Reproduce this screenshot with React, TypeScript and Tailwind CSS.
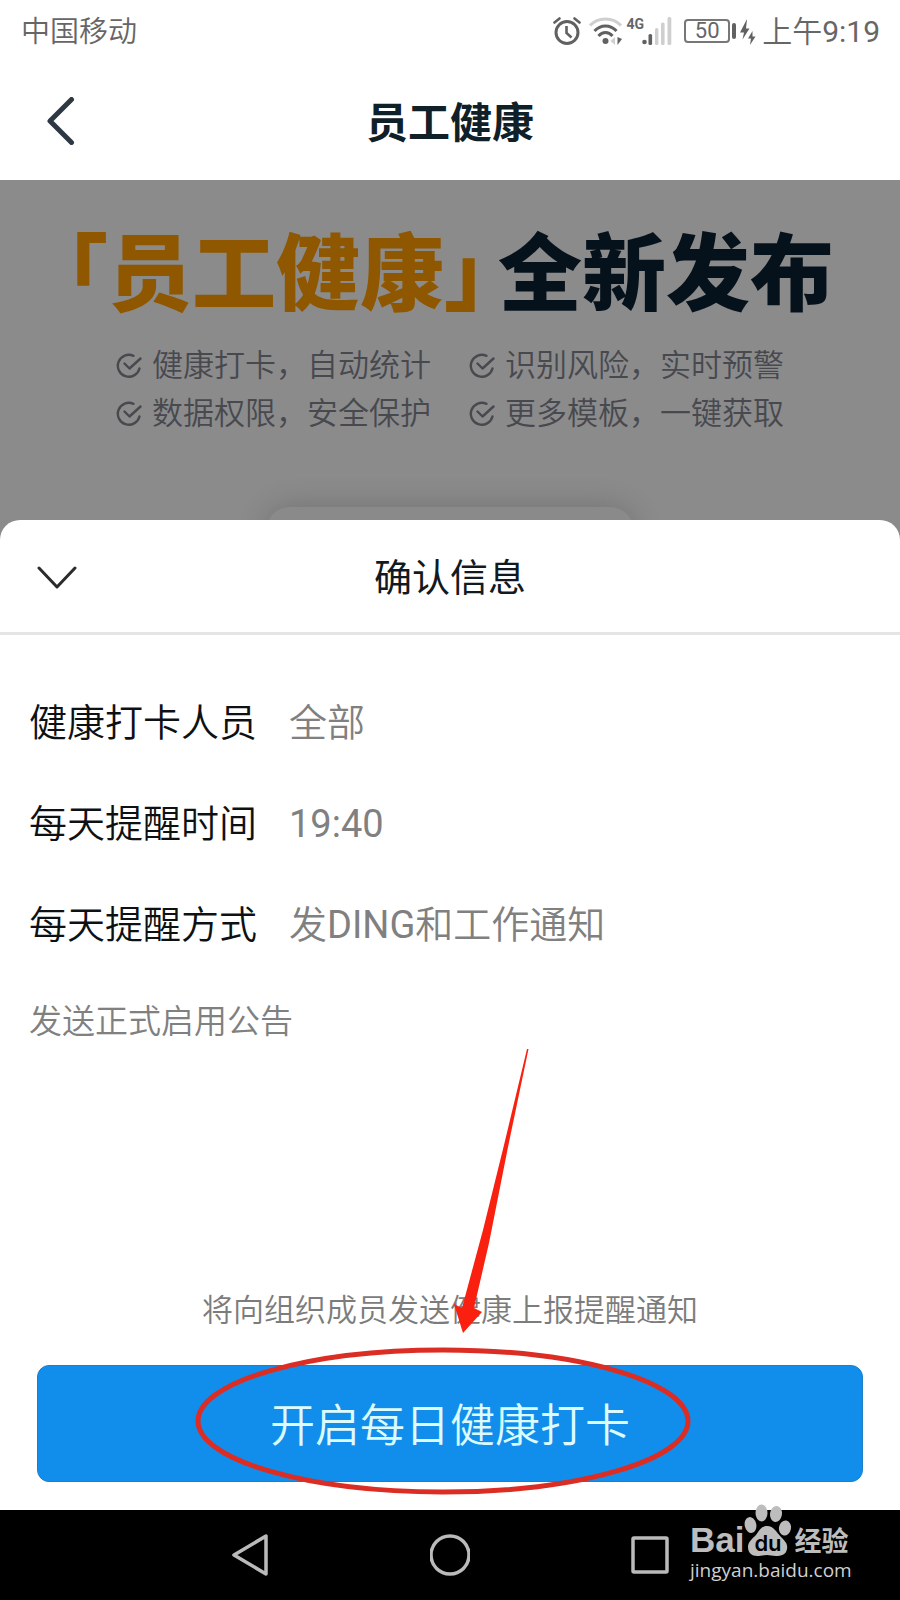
import { useState } from "react";

const features = [
  "健康打卡，自动统计",
  "识别风险，实时预警",
  "数据权限，安全保护",
  "更多模板，一键获取",
];

const details = [
  { label: "健康打卡人员", value: "全部" },
  { label: "每天提醒时间", value: <span className="font-normal">19:40</span> },
  {
    label: "每天提醒方式",
    value: (
      <>
        发<span className="font-normal">DING</span>和工作通知
      </>
    ),
  },
];

function AlarmIcon() {
  return (
    <svg width="28" height="28" viewBox="0 0 28 28" fill="none" stroke="#616161">
      <circle cx="14" cy="15.500" r="11" strokeWidth="3" />
      <path d="M13.500 9v7l5 4.500" strokeWidth="2.600" />
      <path d="M1.500 5.500 6.500 1.500M26.500 5.500 21.500 1.500" strokeWidth="2.600" strokeLinecap="round" />
    </svg>
  );
}

function WifiIcon() {
  return (
    <svg width="34" height="28" viewBox="0 0 34 28" fill="none" strokeWidth="3">
      <path d="M1 8.500C9-.200 24-.200 32 8.500" stroke="#cfcfcf" />
      <path d="M5.500 14c6-6.800 16-6.800 22 0" stroke="#616161" />
      <path d="M9.500 19c4-4.600 10-4.600 14 0" stroke="#616161" />
      <circle cx="16.500" cy="24" r="3" fill="#616161" />
      <path d="M26 20v8l-4.500-4z" fill="#cfcfcf" />
      <path d="M28.500 20v8l4.500-6z" fill="#616161" />
    </svg>
  );
}

function SignalIcon() {
  return (
    <svg width="30" height="28" viewBox="0 0 30 28">
      <circle cx="2.500" cy="25" r="2.300" fill="#616161" />
      <rect x="6.500" y="17" width="3.600" height="11" rx="1.500" fill="#616161" />
      <rect x="13" y="11" width="3.400" height="17" rx="1.500" fill="#cfcfcf" />
      <rect x="19" y="5.500" width="3.600" height="22.500" rx="1.500" fill="#cfcfcf" />
      <rect x="25.500" y="0" width="3.800" height="28" rx="1.500" fill="#cfcfcf" />
    </svg>
  );
}

function BoltIcon() {
  return (
    <svg width="16" height="28" viewBox="0 0 16 28" fill="#616161">
      <path d="M7 2 0 15.500h4L2.500 22.500 9.500 11.500H6z" />
      <path d="M12.500 14 8 21.500h3l-1 6.500 5.500-8.500h-3z" />
    </svg>
  );
}

function CheckIcon() {
  return (
    <svg width="26" height="26" viewBox="0 0 26 26" fill="none" stroke="#47494f" strokeWidth="2.400" strokeLinecap="round" strokeLinejoin="round">
      <path d="M17.500 2.800A11 11 0 1 0 23.500 15.500" />
      <path d="m8.500 10.500 5 5L24.500 5.500" />
    </svg>
  );
}

function PawIcon() {
  return (
    <svg width="50" height="54" viewBox="0 0 50 54" fill="#bdbdbd">
      <ellipse cx="17.500" cy="9" rx="6" ry="8.500" />
      <ellipse cx="32" cy="10" rx="6" ry="8" transform="rotate(8 32 10)" />
      <ellipse cx="6.500" cy="21" rx="5.800" ry="8" transform="rotate(-12 6.500 21)" />
      <ellipse cx="41" cy="24" rx="6" ry="7.500" transform="rotate(10 41 24)" />
      <path d="M23 22c7 0 9 6 14 11 4 4 7 7 6 12-1 6-6 7-11 7-4 0-6-1-9-1s-6 1-10 1C8 52 4 49 4 43c0-5 4-8 8-12 3-4 5-9 11-9z" />
      <text x="24" y="47" textAnchor="middle" fontFamily="Inter, sans-serif" fontSize="22" fontWeight="600" fill="#000">
        du
      </text>
    </svg>
  );
}

function Marker() {
  return (
    <svg
      className="pointer-events-none absolute bottom-3 left-1/2 -translate-x-1/2"
      width="510"
      height="449"
      viewBox="195 1049 510 449"
    >
      <path d="M527 1049h1.500L508 1147 489 1243 474 1308 482 1312 463 1333 454 1304 462 1308 483 1230 504 1145z" fill="#f9200f" />
      <ellipse cx="443" cy="1421" rx="245" ry="71" fill="none" stroke="#dc2d24" strokeWidth="5" />
    </svg>
  );
}

export default function App() {
  const [enabled, setEnabled] = useState(false);

  return (
    <div className="flex min-h-screen flex-col bg-white font-['Roboto','Noto_Sans_CJK_SC',sans-serif]" lang="zh-CN">
      {/* Status bar */}
      <div className="flex h-[62px] items-center justify-between pr-5 pl-[21px] text-[30px] leading-none text-[#666]">
        <span className="pt-0.5 text-[29px] font-[350]">中国移动</span>
        <div className="flex items-center">
          <AlarmIcon />
          <div className="ml-2"><WifiIcon /></div>
          <div className="ml-1 flex">
            <span className="-mr-0.5 text-[14px] leading-none font-bold">4G</span>
            <SignalIcon />
          </div>
          <div className="ml-3 flex h-6 w-[46px] items-center justify-center rounded border-2 border-[#777] text-[22px] leading-none">
            50
          </div>
          <div className="ml-0.5 h-4 w-1 rounded-sm bg-[#616161]" />
          <div className="ml-1"><BoltIcon /></div>
          <span className="ml-1.5 pt-0.5 font-[350]">
            上午<span className="font-normal">9:19</span>
          </span>
        </div>
      </div>

      {/* Title bar */}
      <header className="grid h-[118px] grid-cols-[120px_1fr_120px] items-center">
        <button aria-label="返回" className="pl-[46px]">
          <svg width="30" height="48" viewBox="0 0 30 48" fill="none" stroke="#2d3843" strokeWidth="5" strokeLinecap="round" strokeLinejoin="round">
            <path d="M25.500 2.500 4 24l21.500 21.500" />
          </svg>
        </button>
        <h1 className="pt-1.5 text-center text-[42px] leading-none font-bold text-[#0f2029]">员工健康</h1>
      </header>

      <div className="flex flex-1 flex-col bg-[#8b8b8b]">
        {/* Dimmed banner */}
        <section className="flex h-[340px] flex-col items-center overflow-hidden pt-12">
          <h2 className="flex gap-3 text-[84px] leading-[96px] font-black whitespace-nowrap text-[#06121b] [font-feature-settings:'halt']">
            <span className="text-[#8f5800]">「员工健康」</span>
            <span>全新发布</span>
          </h2>
          <ul className="mt-[18px] grid grid-cols-[auto_auto] gap-x-[38px] text-[31px] leading-[48px] font-[350] text-[#47494f]">
            {features.map((item) => (
              <li key={item} className="flex items-center gap-2.5 whitespace-nowrap">
                <CheckIcon />
                <span>{item}</span>
              </li>
            ))}
          </ul>
          <div className="mt-[69px] h-24 w-[368px] shrink-0 rounded-3xl bg-[#8a8a8a] shadow-[0_0_30px_rgba(0,0,0,0.18)]" />
        </section>

        {/* Confirm sheet */}
        <section className="z-10 flex flex-1 flex-col rounded-t-[20px] bg-white">
          <div className="grid h-[115px] grid-cols-[120px_1fr_120px] items-center border-b-3 border-[#e5e5e5]">
            <button aria-label="收起" className="pt-1 pl-9">
              <svg width="42" height="24" viewBox="0 0 42 24" fill="none" stroke="#2b2b2b" strokeWidth="3" strokeLinecap="round" strokeLinejoin="round">
                <path d="m3 2 18 19L39 2" />
              </svg>
            </button>
            <h2 className="pt-1 text-center text-[38px] leading-none text-[#111a20]">确认信息</h2>
          </div>

          <dl className="mt-[38px] px-[29px] text-[38px] leading-[101px] font-[350]">
            {details.map((row) => (
              <div key={row.label} className="flex gap-8">
                <dt className="text-[#0e1113]">{row.label}</dt>
                <dd className="text-[#808080]">{row.value}</dd>
              </div>
            ))}
          </dl>
          <p className="mt-[22px] px-[29px] text-[33px] leading-[48px] font-[350] text-[#808080]">发送正式启用公告</p>

          <div className="relative mt-auto px-[37px] pb-7">
            <p className="mb-[30px] text-center text-[31px] leading-[48px] font-[350] text-[#7c7c7c]">
              将向组织成员发送健康上报提醒通知
            </p>
            <button
              onClick={() => setEnabled(true)}
              aria-pressed={enabled}
              className="h-[117px] w-full rounded-xl border border-[#1c7fc8] bg-[#118eeb] pt-1.5 text-[45px] leading-none font-[350] text-[#dcfbff]"
            >
              开启每日健康打卡
            </button>
            <Marker />
          </div>
        </section>
      </div>

      {/* System navigation */}
      <nav className="relative z-20 flex h-[90px] items-center justify-center gap-40 bg-black">
        <button aria-label="后退">
          <svg width="40" height="44" viewBox="0 0 40 44" fill="none" stroke="#bababa" strokeWidth="3.500" strokeLinejoin="round">
            <path d="M36 3v38L4 22z" />
          </svg>
        </button>
        <button aria-label="主页">
          <svg width="40" height="44" viewBox="0 0 40 44" fill="none" stroke="#bababa" strokeWidth="3.500">
            <circle cx="20" cy="22" r="19" />
          </svg>
        </button>
        <button aria-label="最近任务">
          <svg width="40" height="44" viewBox="0 0 40 44" fill="none" stroke="#bababa" strokeWidth="3.500" strokeLinejoin="round">
            <rect x="3" y="5" width="34" height="34" rx="1" />
          </svg>
        </button>

        {/* Site mark */}
        <div className="absolute right-[50px] bottom-[18px] w-40 text-[#bdbdbd]">
          <div className="flex items-end">
            <span className="font-['Liberation_Sans',sans-serif] text-[35px] leading-9 font-bold">Bai</span>
            <PawIcon />
            <span className="text-[27px] leading-8 font-bold">经验</span>
          </div>
          <a href="#jingyan" className="block font-['Open_Sans',sans-serif] text-[19px] leading-6 text-[#d0d0d0]">
            jingyan.baidu.com
          </a>
        </div>
      </nav>
    </div>
  );
}
